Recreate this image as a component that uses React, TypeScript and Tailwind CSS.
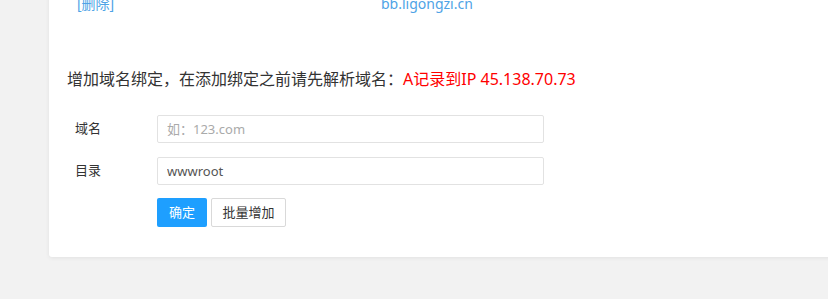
export default function App() {
  return (
    <div className="h-[299px] w-[828px] overflow-hidden bg-[#f2f2f2] pl-[49px] font-['Noto_Sans','Noto_Sans_CJK_SC',sans-serif] text-[#333]">
      <div className="w-[800px] rounded-b-[3px] bg-white pb-[30px] pl-[18px] shadow-[0_1px_4px_rgba(0,0,0,0.07)]">
        {/* last row of the bound-domain table, cut by the top edge */}
        <div className="-mt-[6px] flex h-[20px] items-center text-[14px] leading-[20px] text-[#4ea3e6]">
          <span className="ml-[10px] w-[304px]">[删除]</span>
          <span>bb.ligongzi.cn</span>
        </div>

        <p className="mt-[53px] text-[16px] leading-[24px]">
          增加域名绑定，在添加绑定之前请先解析域名：
          <span className="text-[#ff0000]">A记录到IP 45.138.70.73</span>
        </p>

        <form className="mt-[24px] flex flex-col gap-[14px] pl-[8px] text-[13px]">
          <div className="flex items-center">
            <label className="w-[82px]">域名</label>
            <input
              type="text"
              placeholder="如：123.com"
              className="h-[28px] w-[387px] rounded-[2px] border border-[#e2e2e2] px-[9px] text-[13px] text-[#555] outline-none placeholder:text-[#aaa]"
            />
          </div>
          <div className="flex items-center">
            <label className="w-[82px]">目录</label>
            <input
              type="text"
              defaultValue="wwwroot"
              className="h-[28px] w-[387px] rounded-[2px] border border-[#e2e2e2] px-[9px] text-[13px] text-[#555] outline-none"
            />
          </div>
          <div className="-mt-[1px] flex gap-[4px] pl-[82px]">
            <button
              type="button"
              className="h-[29px] w-[50px] rounded-[2px] bg-[#1e9fff] text-[13px] text-white"
            >
              确定
            </button>
            <button
              type="button"
              className="h-[29px] w-[75px] rounded-[2px] border border-[#d9d9d9] bg-white text-[13px] text-[#333]"
            >
              批量增加
            </button>
          </div>
        </form>
      </div>
    </div>
  );
}
